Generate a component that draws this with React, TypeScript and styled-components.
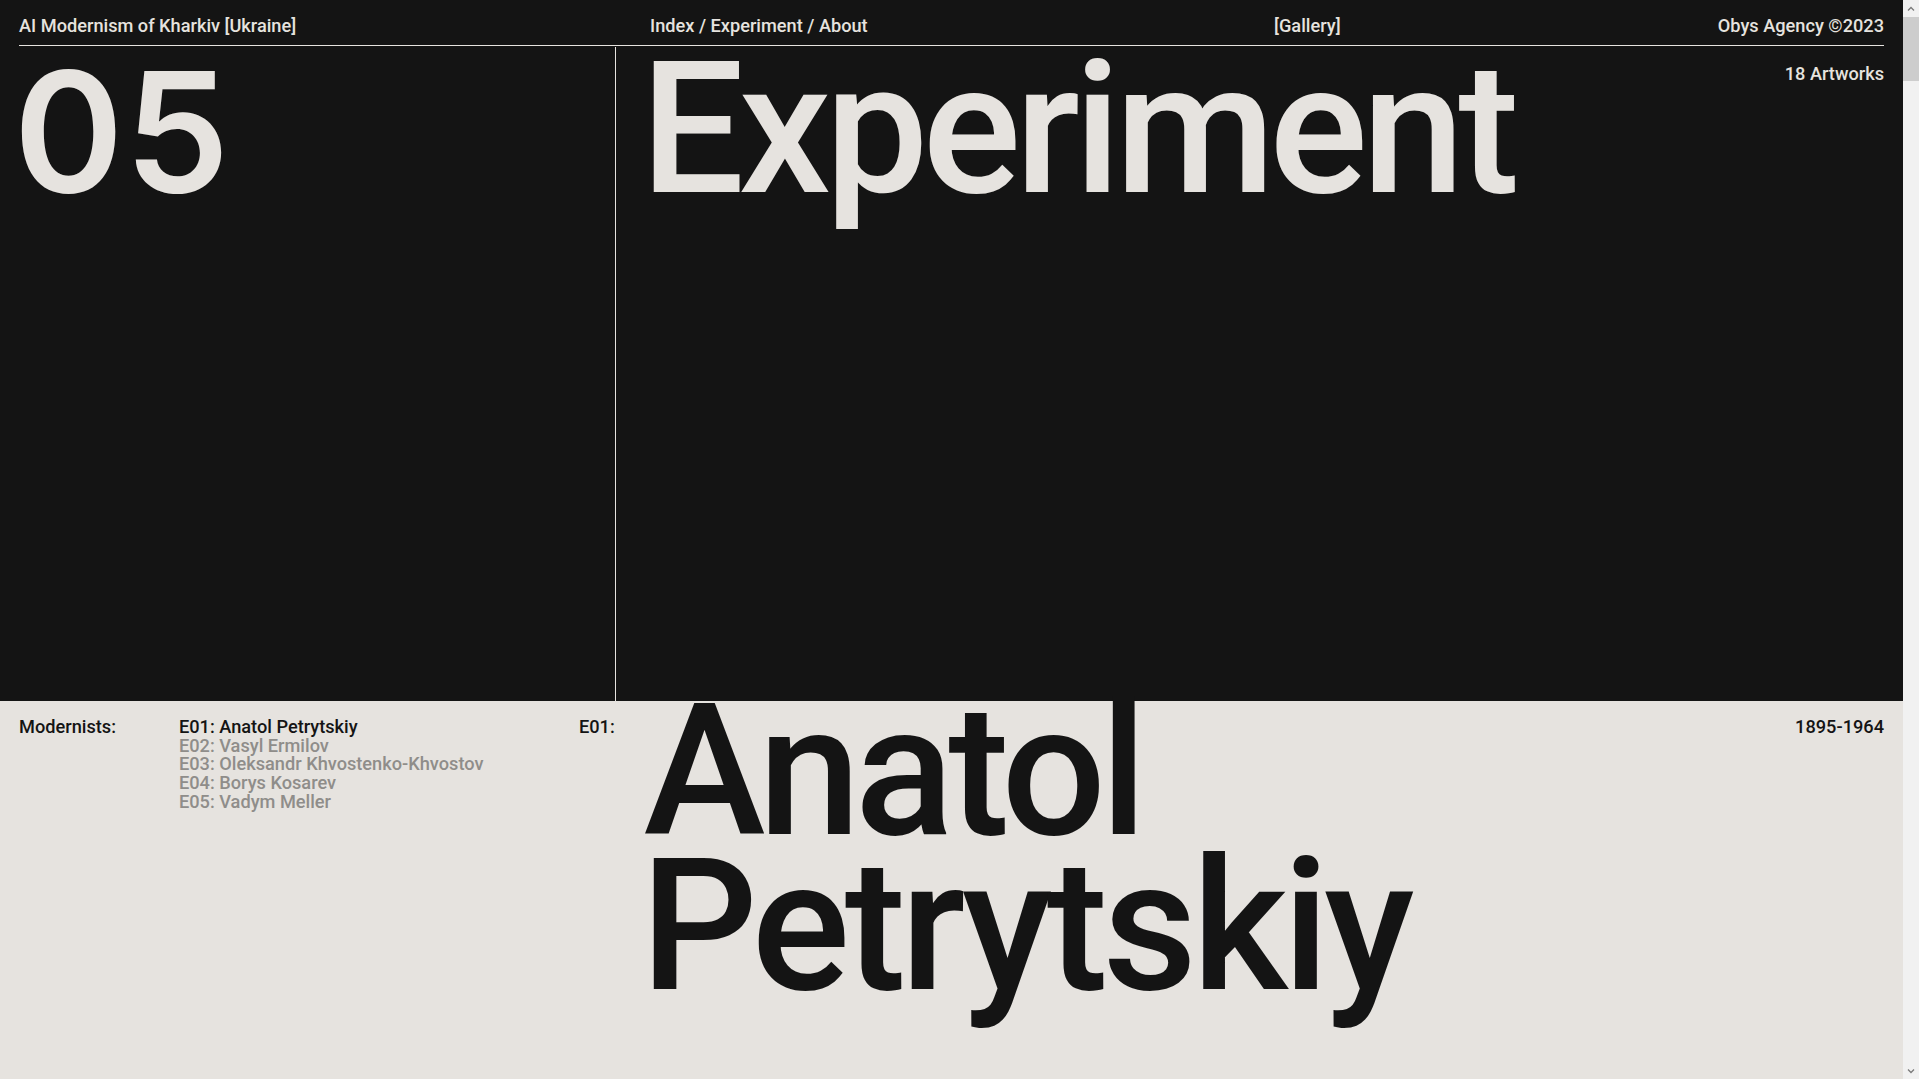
import React from "react";
import styled, { createGlobalStyle } from "styled-components";

const DARK = "#141414";
const LIGHT = "#e6e3df";
const GREY = "#8f8d8a";

const GlobalStyle = createGlobalStyle`
  html, body {
    margin: 0;
    padding: 0;
    background: ${LIGHT};
  }
  body {
    font-family: Roboto, "Liberation Sans", Arial, sans-serif;
    font-weight: 500;
    -webkit-font-smoothing: antialiased;
  }
  * { box-sizing: border-box; }
`;

const Page = styled.div`
  display: flex;
  flex-direction: column;
  margin-right: 16px;
`;

const Top = styled.div`
  background: ${DARK};
  color: ${LIGHT};
  padding: 0 19px;
`;

const Header = styled.header`
  display: grid;
  grid-template-columns: 631px 624px 1fr auto;
  padding: 15px 0 9px;
  border-bottom: 1px solid ${LIGHT};
`;

const SmallText = styled.span<{ $tone?: "dark" | "grey" }>`
  font-size: 18.2px;
  line-height: 21px;
  letter-spacing: 0;
  white-space: nowrap;
  color: ${(p) => (p.$tone === "dark" ? DARK : p.$tone === "grey" ? GREY : "inherit")};
`;

const Hero = styled.section`
  display: grid;
  grid-template-columns: 597px 1fr;
  height: 655px;
`;

const HeroLeft = styled.div`
  border-right: 1px solid ${LIGHT};
  padding-top: 7.2px;
  margin-top: 1px;
`;

const HeroRight = styled.div`
  display: flex;
  justify-content: space-between;
  align-items: flex-start;
  padding: 6px 0 0 24.5px;
`;

const BigText = styled.h1<{ $tracking?: string; $indent?: number }>`
  margin: 0 0 0 ${(p) => p.$indent ?? 0}px;
  font-weight: 500;
  font-size: 184px;
  line-height: 155px;
  letter-spacing: ${(p) => p.$tracking ?? "-0.0325em"};
  white-space: nowrap;
`;

const Numeral = styled(BigText)`
  font-family: Inter, Roboto, sans-serif;
  font-size: 167px;
  font-weight: 600;
`;

const Count = styled(SmallText)`
  margin-top: 10.5px;
`;

const Detail = styled.section`
  display: grid;
  grid-template-columns: 160px 400px 53px 1fr auto;
  align-items: start;
  padding: 17px 19px 0;
  min-height: 16899px;
  background: ${LIGHT};
  color: ${DARK};
`;

const ListText = styled(SmallText)`
  line-height: 18.7px;
  display: block;
`;

const ModernistList = styled.ul`
  list-style: none;
  margin: 0;
  padding: 0;
`;

const Title = styled.div`
  margin-top: -24px;
`;

const TitleLine = styled(BigText).attrs({ as: "div" })``;

const ScrollTrack = styled.aside`
  position: fixed;
  top: 0;
  right: 0;
  bottom: 0;
  width: 16px;
  background: #f1f1f1;
  display: flex;
  flex-direction: column;
  align-items: center;
`;

const ScrollArrow = styled.div`
  height: 17px;
  width: 16px;
  display: flex;
  align-items: center;
  justify-content: center;
  color: #7a7a7a;
`;

const ScrollThumb = styled.div`
  width: 16px;
  height: 64px;
  background: #cdcdcd;
`;

const ScrollSpacer = styled.div`
  flex: 1;
`;

const Chevron = ({ up }: { up?: boolean }) => (
  <svg width="8" height="6" viewBox="0 0 8 6">
    <path
      d={up ? "M1 4.5 L4 1.5 L7 4.5" : "M1 1.5 L4 4.5 L7 1.5"}
      fill="none"
      stroke="currentColor"
      strokeWidth="1.3"
    />
  </svg>
);

const modernists = [
  "E01: Anatol Petrytskiy",
  "E02: Vasyl Ermilov",
  "E03: Oleksandr Khvostenko-Khvostov",
  "E04: Borys Kosarev",
  "E05: Vadym Meller",
];

export default function App() {
  return (
    <Page>
      <GlobalStyle />
      <Top>
        <Header>
          <SmallText>AI Modernism of Kharkiv [Ukraine]</SmallText>
          <SmallText>Index / Experiment / About</SmallText>
          <SmallText>[Gallery]</SmallText>
          <SmallText>Obys Agency ©2023</SmallText>
        </Header>
        <Hero>
          <HeroLeft>
            <Numeral $tracking="0.005em" $indent={-5.5}>05</Numeral>
          </HeroLeft>
          <HeroRight>
            <BigText as="h2">Experiment</BigText>
            <Count>18 Artworks</Count>
          </HeroRight>
        </Hero>
      </Top>
      <Detail>
        <ListText>Modernists:</ListText>
        <ModernistList>
          {modernists.map((m, i) => (
            <li key={m}>
              <ListText $tone={i === 0 ? "dark" : "grey"}>{m}</ListText>
            </li>
          ))}
        </ModernistList>
        <ListText>E01:</ListText>
        <Title>
          <TitleLine $indent={11.6} $tracking="-0.0315em">Anatol</TitleLine>
          <TitleLine $indent={8.5} $tracking="-0.029em">Petrytskiy</TitleLine>
        </Title>
        <ListText>1895-1964</ListText>
      </Detail>
      <ScrollTrack aria-hidden>
        <ScrollArrow>
          <Chevron up />
        </ScrollArrow>
        <ScrollThumb />
        <ScrollSpacer />
        <ScrollArrow>
          <Chevron />
        </ScrollArrow>
      </ScrollTrack>
    </Page>
  );
}
